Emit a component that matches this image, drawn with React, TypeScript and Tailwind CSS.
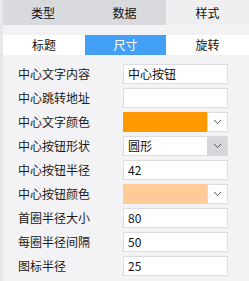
import React from 'react'

const FONT = "font-['Microsoft_YaHei','Noto_Sans_CJK_SC',sans-serif]"

function Chevron() {
  return (
    <svg width="9" height="6" viewBox="0 0 9 6" className="text-[#555]">
      <polyline points="1,1 4.5,4.5 8,1" fill="none" stroke="currentColor" strokeWidth="1" />
    </svg>
  )
}

function TextField({ value }: { value?: string }) {
  return (
    <div className="flex h-[20px] w-[105px] items-center border border-[#dcdde0] bg-white pl-[4px] text-[12px] text-[#111]">
      {value}
    </div>
  )
}

function ColorField({ color }: { color: string }) {
  return (
    <div className="flex h-[20px] w-[105px]">
      <div className={`h-full w-[84px] ${color}`} />
      <div className="flex h-full flex-1 items-center justify-center border border-[#dcdde0] bg-white">
        <Chevron />
      </div>
    </div>
  )
}

function SelectField({ value }: { value: string }) {
  return (
    <div className="flex h-[20px] w-[105px] border border-[#dcdde0] bg-white">
      <div className="flex flex-1 items-center pl-[4px] text-[12px] text-[#111]">{value}</div>
      <div className="flex w-[20px] items-center justify-center bg-[#d6d7da]">
        <Chevron />
      </div>
    </div>
  )
}

const rows: { label: string; field: React.ReactNode }[] = [
  { label: '中心文字内容', field: <TextField value="中心按钮" /> },
  { label: '中心跳转地址', field: <TextField /> },
  { label: '中心文字颜色', field: <ColorField color="bg-[#ff9900]" /> },
  { label: '中心按钮形状', field: <SelectField value="圆形" /> },
  { label: '中心按钮半径', field: <TextField value="42" /> },
  { label: '中心按钮颜色', field: <ColorField color="bg-[#ffcc99]" /> },
  { label: '首圈半径大小', field: <TextField value="80" /> },
  { label: '每圈半径间隔', field: <TextField value="50" /> },
  { label: '图标半径', field: <TextField value="25" /> },
]

export default function App() {
  return (
    <div className={`flex h-[281px] w-[249px] bg-[#f3f3f5] text-[12px] ${FONT}`}>
      <div className="w-[3px] bg-[#e8e8ea]" />
      <div className="flex flex-1 flex-col">
        {/* 顶部标签 */}
        <div className="flex h-[25px] text-[12px] text-[#111]">
          <div className="flex w-[80px] items-center justify-center bg-[#d9dadd]">类型</div>
          <div className="flex w-[83px] items-center justify-center bg-[#d9dadd]">数据</div>
          <div className="flex flex-1 items-center justify-center bg-[#efeff1]">样式</div>
        </div>

        {/* 子标签 */}
        <div className="mt-[10px] flex h-[20px] bg-white text-[12px] text-[#111]">
          <div className="flex w-[82px] items-center justify-center">标题</div>
          <div className="flex w-[81px] items-center justify-center bg-[#42a0f6] text-white">尺寸</div>
          <div className="flex flex-1 items-center justify-center">旋转</div>
        </div>

        <div className="flex flex-col gap-[4px] pl-[15px] pt-[9px]">
          {rows.map((r) => (
            <div key={r.label} className="flex h-[20px] items-center">
              <div className="w-[105px] text-[12px] text-[#1a1a1a]">{r.label}</div>
              {r.field}
            </div>
          ))}
        </div>
      </div>
    </div>
  )
}
